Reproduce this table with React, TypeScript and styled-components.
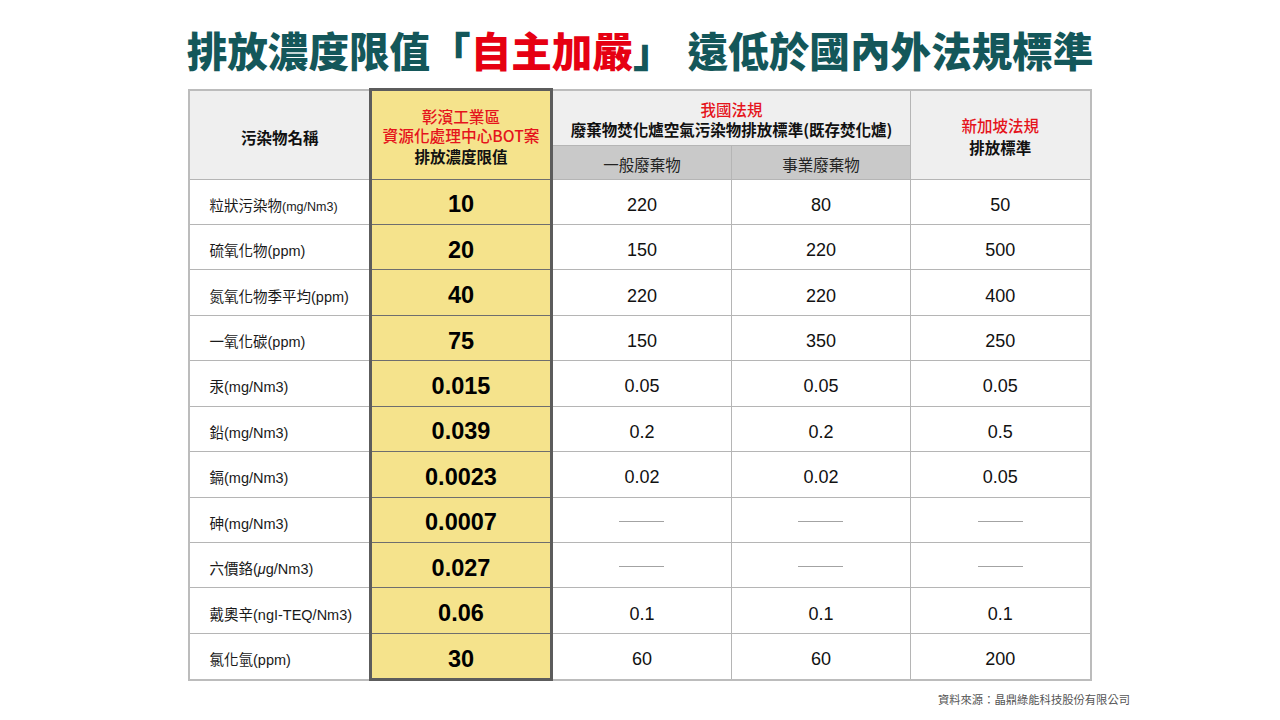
import React from "react";
import styled, { createGlobalStyle } from "styled-components";

const Global = createGlobalStyle`
  html, body { margin: 0; padding: 0; background: #ffffff; }
  body { font-family: "Liberation Sans", "Noto Sans CJK TC", sans-serif; color: #111; }
`;

const Page = styled.div`
  width: 1280px;
  height: 720px;
  display: flex;
  flex-direction: column;
  align-items: center;
  overflow: hidden;
`;

const Title = styled.h1`
  margin: 30px 0 18px;
  font-family: "Noto Sans CJK TC", sans-serif;
  font-weight: 900;
  font-size: 40.6px;
  line-height: 40px;
  color: #14575a;
  white-space: nowrap;
  letter-spacing: 0;
`;

const Red = styled.span`
  color: #e60012;
`;

const Gap = styled.span`
  display: inline-block;
  width: 14px;
`;

const Table = styled.table`
  border-collapse: collapse;
  table-layout: fixed;
  width: 901px;
  border: 2px solid #bcbcbc;
`;

const ROW = 44.45;

const Cell = styled.td<{ $bg?: string; $pt?: number }>`
  border: 1px solid #b5b5b5;
  background: ${(p) => p.$bg || "#ffffff"};
  text-align: center;
  vertical-align: middle;
  padding: ${(p) => p.$pt ?? 4}px 0 0;
  height: ${(p) => ROW - (p.$pt ?? 4)}px;
`;

const HeadCell = styled(Cell)<{ $h?: number }>`
  height: ${(p) => (p.$h ? `${p.$h - 4}px` : "auto")};
  font-family: "Noto Sans CJK TC", sans-serif;
  font-size: 15.5px;
  line-height: 20px;
`;

const YellowHead = styled(HeadCell)`
  background: #f5e38c;
  border: 3px solid #5c5c5c;
  border-bottom: 1px solid #6e6e6e;
`;

const YellowCell = styled(Cell)<{ $last?: boolean }>`
  background: #f5e38c;
  border-left: 3px solid #5c5c5c;
  border-right: 3px solid #5c5c5c;
  border-top: 1px solid #6e6e6e;
  border-bottom: ${(p) => (p.$last ? "3px solid #5c5c5c" : "1px solid #6e6e6e")};
  font-family: "Liberation Sans", sans-serif;
  font-weight: 700;
  font-size: 23.5px;
  color: #000;
`;

const LabelCell = styled(Cell)`
  text-align: left;
  padding-left: 19px;
  font-size: 14.5px;
  color: #1a1a1a;
`;

const ValueCell = styled(Cell)`
  font-family: "Liberation Sans", sans-serif;
  font-size: 18px;
  color: #111;
`;

const Unit = styled.span<{ $small?: boolean }>`
  font-family: "Liberation Sans", sans-serif;
  font-size: ${(p) => (p.$small ? "12.5px" : "14.5px")};
`;

const Mu = styled.i`
  font-style: italic;
`;

const RedLine = styled.div<{ $size?: number }>`
  color: #e5141c;
  font-weight: 500;
  font-size: ${(p) => (p.$size ? `${p.$size}px` : "inherit")};
  line-height: 19px;
`;

const BoldLine = styled.div<{ $gap?: number }>`
  font-weight: 700;
  color: #111;
  margin-top: ${(p) => p.$gap || 0}px;
`;

const RegLine = styled.div`
  font-weight: 400;
  color: #222;
`;

const Dash = styled.span`
  display: inline-block;
  width: 45px;
  height: 1px;
  background: #a3a3a3;
  vertical-align: middle;
  margin-top: -6px;
`;

const Source = styled.div`
  width: 980px;
  text-align: right;
  margin-top: 10px;
  font-family: "Noto Sans CJK TC", sans-serif;
  font-size: 11.3px;
  color: #555;
`;

type Row = {
  name: React.ReactNode;
  own: string;
  a: string | null;
  b: string | null;
  c: string | null;
};

const rows: Row[] = [
  { name: <>粒狀污染物<Unit $small>(mg/Nm3)</Unit></>, own: "10", a: "220", b: "80", c: "50" },
  { name: <>硫氧化物<Unit>(ppm)</Unit></>, own: "20", a: "150", b: "220", c: "500" },
  { name: <>氮氧化物季平均<Unit>(ppm)</Unit></>, own: "40", a: "220", b: "220", c: "400" },
  { name: <>一氧化碳<Unit>(ppm)</Unit></>, own: "75", a: "150", b: "350", c: "250" },
  { name: <>汞<Unit>(mg/Nm3)</Unit></>, own: "0.015", a: "0.05", b: "0.05", c: "0.05" },
  { name: <>鉛<Unit>(mg/Nm3)</Unit></>, own: "0.039", a: "0.2", b: "0.2", c: "0.5" },
  { name: <>鎘<Unit>(mg/Nm3)</Unit></>, own: "0.0023", a: "0.02", b: "0.02", c: "0.05" },
  { name: <>砷<Unit>(mg/Nm3)</Unit></>, own: "0.0007", a: null, b: null, c: null },
  { name: <>六價鉻<Unit>(<Mu>μ</Mu>g/Nm3)</Unit></>, own: "0.027", a: null, b: null, c: null },
  { name: <>戴奧辛<Unit>(ngI-TEQ/Nm3)</Unit></>, own: "0.06", a: "0.1", b: "0.1", c: "0.1" },
  { name: <>氯化氫<Unit>(ppm)</Unit></>, own: "30", a: "60", b: "60", c: "200" },
];

const Val = ({ v }: { v: string | null }) => (
  <ValueCell $pt={7}>{v === null ? <Dash /> : v}</ValueCell>
);

export default function App() {
  return (
    <Page>
      <Global />
      <Title>
        排放濃度限值「<Red>自主加嚴</Red>」<Gap />遠低於國內外法規標準
      </Title>
      <Table>
        <colgroup>
          <col style={{ width: 181 }} />
          <col style={{ width: 181 }} />
          <col style={{ width: 180 }} />
          <col style={{ width: 179 }} />
          <col style={{ width: 180 }} />
        </colgroup>
        <thead>
          <tr>
            <HeadCell as="th" rowSpan={2} $bg="#efefef">
              <BoldLine>污染物名稱</BoldLine>
            </HeadCell>
            <YellowHead as="th" rowSpan={2}>
              <RedLine $size={15.7}>彰濱工業區</RedLine>
              <RedLine $size={15.7}>資源化處理中心BOT案</RedLine>
              <BoldLine $gap={1}>排放濃度限值</BoldLine>
            </YellowHead>
            <HeadCell as="th" colSpan={2} $bg="#efefef" $h={54}>
              <RedLine>我國法規</RedLine>
              <BoldLine>廢棄物焚化爐空氣污染物排放標準(既存焚化爐)</BoldLine>
            </HeadCell>
            <HeadCell as="th" rowSpan={2} $bg="#efefef">
              <RedLine>新加坡法規</RedLine>
              <BoldLine $gap={2}>排放標準</BoldLine>
            </HeadCell>
          </tr>
          <tr>
            <HeadCell as="th" $bg="#c9c9c9" $h={33}>
              <RegLine>一般廢棄物</RegLine>
            </HeadCell>
            <HeadCell as="th" $bg="#c9c9c9" $h={33}>
              <RegLine>事業廢棄物</RegLine>
            </HeadCell>
          </tr>
        </thead>
        <tbody>
          {rows.map((r, i) => (
            <tr key={i}>
              <LabelCell $pt={5}>{r.name}</LabelCell>
              <YellowCell $pt={6} $last={i === rows.length - 1}>
                {r.own}
              </YellowCell>
              <Val v={r.a} />
              <Val v={r.b} />
              <Val v={r.c} />
            </tr>
          ))}
        </tbody>
      </Table>
      <Source>資料來源：晶鼎綠能科技股份有限公司</Source>
    </Page>
  );
}
